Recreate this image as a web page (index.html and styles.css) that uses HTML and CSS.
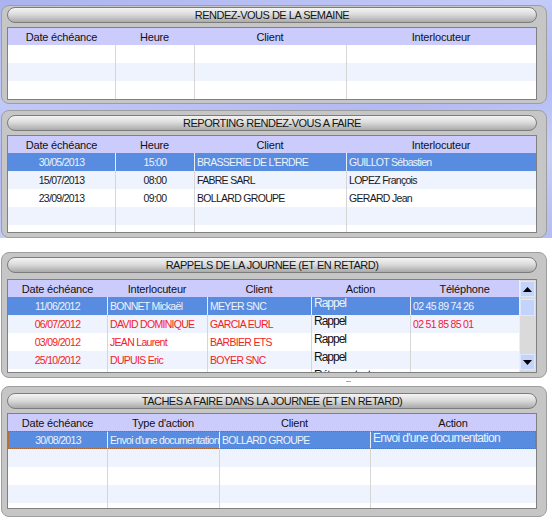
FILE: index.html
```html
<!DOCTYPE html>
<html lang="fr">
<head>
    <meta charset="UTF-8">
    <title>Tableau de bord</title>
    <link rel="stylesheet" href="styles.css">
</head>
<body>
    <div class="top">
        <div class="panel p1">
            <div class="title">RENDEZ-VOUS DE LA SEMAINE</div>
            <div class="grid g1">
                <table>
                    <colgroup><col class="c107"><col class="c79"><col class="c152"><col></colgroup>
                    <thead><tr><th>Date échéance</th><th>Heure</th><th>Client</th><th>Interlocuteur</th></tr></thead>
                    <tbody>
                        <tr><td></td><td></td><td></td><td></td></tr>
                        <tr><td></td><td></td><td></td><td></td></tr>
                        <tr><td></td><td></td><td></td><td></td></tr>
                    </tbody>
                </table>
            </div>
        </div>

        <div class="panel p2">
            <div class="title">REPORTING RENDEZ-VOUS A FAIRE</div>
            <div class="grid g2">
                <table>
                    <colgroup><col class="c107"><col class="c79"><col class="c152"><col></colgroup>
                    <thead><tr><th>Date échéance</th><th>Heure</th><th>Client</th><th>Interlocuteur</th></tr></thead>
                    <tbody>
                        <tr class="sel"><td class="mid">30/05/2013</td><td class="mid">15:00</td><td>BRASSERIE DE L'ERDRE</td><td>GUILLOT Sébastien</td></tr>
                        <tr><td class="mid">15/07/2013</td><td class="mid">08:00</td><td>FABRE SARL</td><td>LOPEZ François</td></tr>
                        <tr><td class="mid">23/09/2013</td><td class="mid">09:00</td><td>BOLLARD GROUPE</td><td>GERARD Jean</td></tr>
                        <tr><td></td><td></td><td></td><td></td></tr>
                        <tr><td></td><td></td><td></td><td></td></tr>
                    </tbody>
                </table>
            </div>
        </div>
    </div>

    <div class="panel p3">
        <div class="title">RAPPELS DE LA JOURNEE (ET EN RETARD)</div>
        <div class="grid g3">
            <table>
                <colgroup><col class="c99"><col class="c100"><col class="c104"><col class="c99"><col></colgroup>
                <thead><tr><th>Date échéance</th><th>Interlocuteur</th><th>Client</th><th>Action</th><th>Téléphone</th></tr></thead>
                <tbody>
                    <tr class="sel"><td class="mid">11/06/2012</td><td>BONNET Mickaël</td><td>MEYER SNC</td><td class="act">Rappel</td><td>02 45 89 74 26</td></tr>
                    <tr class="late"><td class="mid">06/07/2012</td><td>DAVID DOMINIQUE</td><td>GARCIA EURL</td><td class="act">Rappel</td><td class="phone">02 51 85 85 01</td></tr>
                    <tr class="late"><td class="mid">03/09/2012</td><td>JEAN Laurent</td><td>BARBIER ETS</td><td class="act">Rappel</td><td></td></tr>
                    <tr class="late"><td class="mid">25/10/2012</td><td>DUPUIS Eric</td><td>BOYER SNC</td><td class="act">Rappel</td><td></td></tr>
                    <tr><td></td><td></td><td></td><td class="act">Rétrocontact</td><td></td></tr>
                </tbody>
            </table>
            <div class="vscroll">
                <div class="sbtn">
                    <svg width="9" height="5" viewBox="0 0 9 5"><polygon points="0,5 9,5 4.5,0" fill="#000"/></svg>
                </div>
                <div class="thumb"></div>
                <div class="sbtn down">
                    <svg width="9" height="5" viewBox="0 0 9 5"><polygon points="0,0 9,0 4.5,5" fill="#000"/></svg>
                </div>
            </div>
        </div>
    </div>

    <div class="grip"><span></span></div>

    <div class="panel p4">
        <div class="title">TACHES A FAIRE DANS LA JOURNEE (ET EN RETARD)</div>
        <div class="grid g4">
            <table>
                <colgroup><col class="c99"><col class="c112"><col class="c151"><col></colgroup>
                <thead><tr><th>Date échéance</th><th>Type d'action</th><th>Client</th><th>Action</th></tr></thead>
                <tbody>
                    <tr class="sel focus"><td class="mid">30/08/2013</td><td>Envoi d'une documentation</td><td>BOLLARD GROUPE</td><td class="act">Envoi d'une documentation</td></tr>
                    <tr><td></td><td></td><td></td><td></td></tr>
                    <tr><td></td><td></td><td></td><td></td></tr>
                    <tr><td></td><td></td><td></td><td></td></tr>
                    <tr><td></td><td></td><td></td><td></td></tr>
                </tbody>
            </table>
        </div>
    </div>
</body>
</html>
```

FILE: styles.css
```css
body {
    margin: 0;
    background: #fff;
    font-family: "Liberation Sans", Arial, sans-serif;
    color: #1a1a1a;
}

.top {
    padding-top: 5px;
    background: linear-gradient(170deg, #aab3ee 0%, #c3cbf8 28%, #b1baf2 52%, #c7cff9 74%, #b4bcf2 100%);
}

/* panneaux gris arrondis */
.panel {
    box-sizing: border-box;
    width: 546px;
    margin-left: 1px;
    padding: 4px 9px 4px 5px;
    background: #c6c6c6;
    border: 1px solid #9e9e9e;
    border-radius: 8px;
}
.p1 { padding-top: 1px; padding-bottom: 3px; }
.p2 { margin-top: 6px; }
.p3 { margin-top: 14px; }
.p4 { padding-top: 6px; padding-bottom: 7px; }
.p3 .title { margin-bottom: 6px; }

.title {
    box-sizing: border-box;
    height: 16px;
    margin-bottom: 4px;
    border: 1px solid #7c7c7c;
    border-radius: 8px;
    background: linear-gradient(#f4f4f4, #dcdcdc 45%, #aaaaaa);
    text-align: center;
    font-size: 11px;
    line-height: 14px;
    letter-spacing: -0.5px;
    color: #151515;
}

.grid {
    display: flex;
    border: 1px solid #808080;
    background: #fff;
    overflow: hidden;
}
.g1 { height: 71px; }
.g2 { height: 96px; }
.g3 { height: 92px; }
.g4 { height: 94px; }

table {
    flex: 1;
    table-layout: fixed;
    border-collapse: separate;
    border-spacing: 0;
    width: 100%;
}
.c79 { width: 79px; }
.c99 { width: 99px; }
.c100 { width: 100px; }
.c104 { width: 104px; }
.c107 { width: 107px; }
.c112 { width: 112px; }
.c151 { width: 151px; }
.c152 { width: 152px; }

th {
    height: 17px;
    padding: 0;
    background: #ccccfc;
    font-weight: normal;
    font-size: 11px;
    letter-spacing: -0.2px;
    color: #111;
}

tbody tr { height: 18px; }
tbody tr:nth-child(even) { background: #eff3fd; }

td {
    padding: 0 0 0 2px;
    font-size: 10.5px;
    letter-spacing: -0.7px;
    line-height: 14px;
    white-space: nowrap;
    overflow: hidden;
}
td + td { border-left: 1px solid #d6d6d6; }
td.mid { text-align: center; padding: 0; }

td.act {
    vertical-align: top;
    font-size: 12px;
    letter-spacing: -1px;
    line-height: 13px;
    color: #111;
}
.g4 td.act { letter-spacing: -0.7px; }

tr.sel, tr.sel:nth-child(even) { background: #588ce0; }
tr.sel td { color: #eef2fa; border-left-color: #e8ecf4; }
tr.late td { color: #f52222; }
tr.late td.act { color: #111; }
tr.late td.phone { color: #f0203c; }

tr.focus td {
    border-top: 1px dotted #a8642c;
    border-bottom: 1px dotted #a8642c;
}
tr.focus td:first-child { border-left: 1px dotted #a8642c; }
tr.focus td:last-child { border-right: 1px dotted #a8642c; }

/* barre de defilement */
.vscroll {
    display: flex;
    flex-direction: column;
    width: 17px;
    background: #dadada;
    border-left: 1px solid #eeeeee;
    box-sizing: border-box;
}
.sbtn, .thumb {
    box-sizing: border-box;
    margin: 1px 1px 0 0;
    height: 16px;
    background: #c3d3fb;
    border: 1px solid #dfe7fd;
}
.sbtn {
    display: flex;
    align-items: center;
    justify-content: center;
}
.thumb { margin-top: 2px; height: 17px; }
.sbtn.down { margin-top: auto; margin-bottom: 2px; }

.grip {
    box-sizing: border-box;
    height: 8px;
    padding-top: 3px;
}
.grip span {
    display: block;
    width: 5px;
    height: 1px;
    margin-left: 346px;
    background: #a8a8a8;
}
```
